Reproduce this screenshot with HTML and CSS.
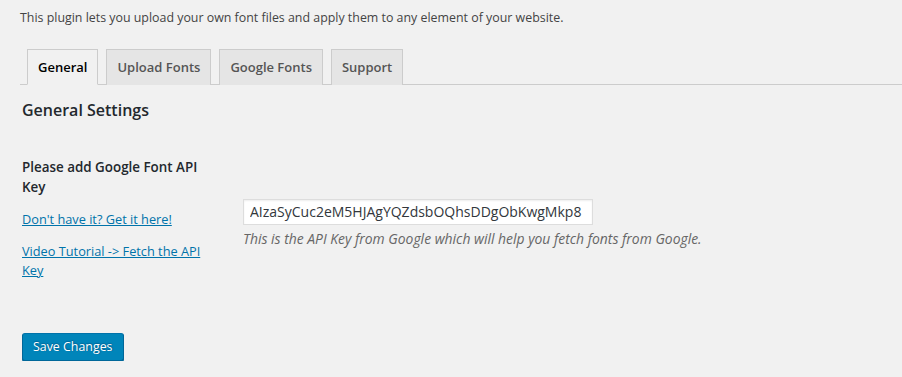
FILE: index.html
```html
<!DOCTYPE html>
<html>
  <head>
    <meta charset="utf-8">
    <title>Font Settings</title>
    <link rel="stylesheet" href="styles.css">
  </head>
  <body>
    <div class="wrap">
      <p class="intro">This plugin lets you upload your own font files and apply them to any element of your website.</p>

      <nav class="nav-tabs">
        <a class="nav-tab active" href="#">General</a>
        <a class="nav-tab" href="#">Upload Fonts</a>
        <a class="nav-tab" href="#">Google Fonts</a>
        <a class="nav-tab" href="#">Support</a>
      </nav>

      <form class="settings">
        <h2>General Settings</h2>

        <div class="form-row">
          <div class="field-label">
            <label for="api_key">Please add Google Font API Key</label>
            <p><a href="#">Don't have it? Get it here!</a></p>
            <p><a href="#">Video Tutorial -&gt; Fetch the API Key</a></p>
          </div>
          <div class="field">
            <input id="api_key" type="text" value="AIzaSyCuc2eM5HJAgYQZdsbOQhsDDgObKwgMkp8">
            <p class="description">This is the API Key from Google which will help you fetch fonts from Google.</p>
          </div>
        </div>

        <p class="submit">
          <button type="button" class="button-primary">Save Changes</button>
        </p>
      </form>
    </div>
  </body>
</html>
```

FILE: styles.css
```css
body {
  margin: 0;
  background: #f1f1f1;
  color: #444;
  font-family: "Open Sans", "Noto Sans", sans-serif;
  font-size: 12.4px;
  line-height: 1.4em;
}

.wrap {
  padding: 8px 0 0 20px;
}

.intro {
  margin: 0;
  line-height: 20px;
}

/* tabs */

.nav-tabs {
  display: flex;
  gap: 8px;
  margin-top: 21px;
  padding-left: 7px;
  border-bottom: 1px solid #ccc;
}

.nav-tab {
  display: block;
  padding: 5px 10px;
  border: 1px solid #ccc;
  border-bottom: none;
  margin-bottom: -1px;
  background: #e5e5e5;
  color: #555;
  font-size: 13px;
  font-weight: 600;
  line-height: 24px;
  text-decoration: none;
}

.nav-tab.active {
  background: #f1f1f1;
  color: #000;
  border-bottom: 1px solid #f1f1f1;
}

/* settings form */

.settings {
  padding-left: 2px;
}

.settings h2 {
  margin: 14px 0 0;
  color: #23282d;
  font-size: 16px;
  font-weight: 600;
  line-height: 23px;
}

.form-row {
  display: grid;
  grid-template-columns: 211px 1fr;
  align-items: center;
  margin-top: 15px;
}

.field-label {
  padding: 20px 10px 20px 0;
}

.field-label label {
  display: block;
  color: #23282d;
  font-size: 13.4px;
  font-weight: 600;
  line-height: 20px;
}

.field-label p {
  margin: 13px 0 0;
  font-size: 12.75px;
  line-height: 19px;
}

.field-label a {
  color: #0073aa;
}

.field {
  padding: 15px 10px 5px;
}

.field input {
  box-sizing: border-box;
  display: block;
  width: 350px;
  height: 26px;
  padding: 2px 6px;
  border: 1px solid #ddd;
  box-shadow: inset 0 1px 2px rgba(0, 0, 0, 0.07);
  background: #fff;
  color: #32373c;
  font-family: inherit;
  font-size: 14px;
}

.description {
  margin: 4px 0 0;
  color: #666;
  font-size: 13.9px;
  font-style: italic;
  line-height: 20px;
}

.submit {
  margin: 33px 0 0;
}

.button-primary {
  height: 28px;
  padding: 0 10px 1px;
  border: 1px solid;
  border-color: #0073aa #006799 #006799;
  border-radius: 3px;
  box-shadow: 0 1px 0 #006799;
  background: #0085ba;
  color: #fff;
  font-family: inherit;
  font-size: 12.4px;
  line-height: 26px;
  text-shadow: 0 -1px 1px #006799, 1px 0 1px #006799;
}
```
